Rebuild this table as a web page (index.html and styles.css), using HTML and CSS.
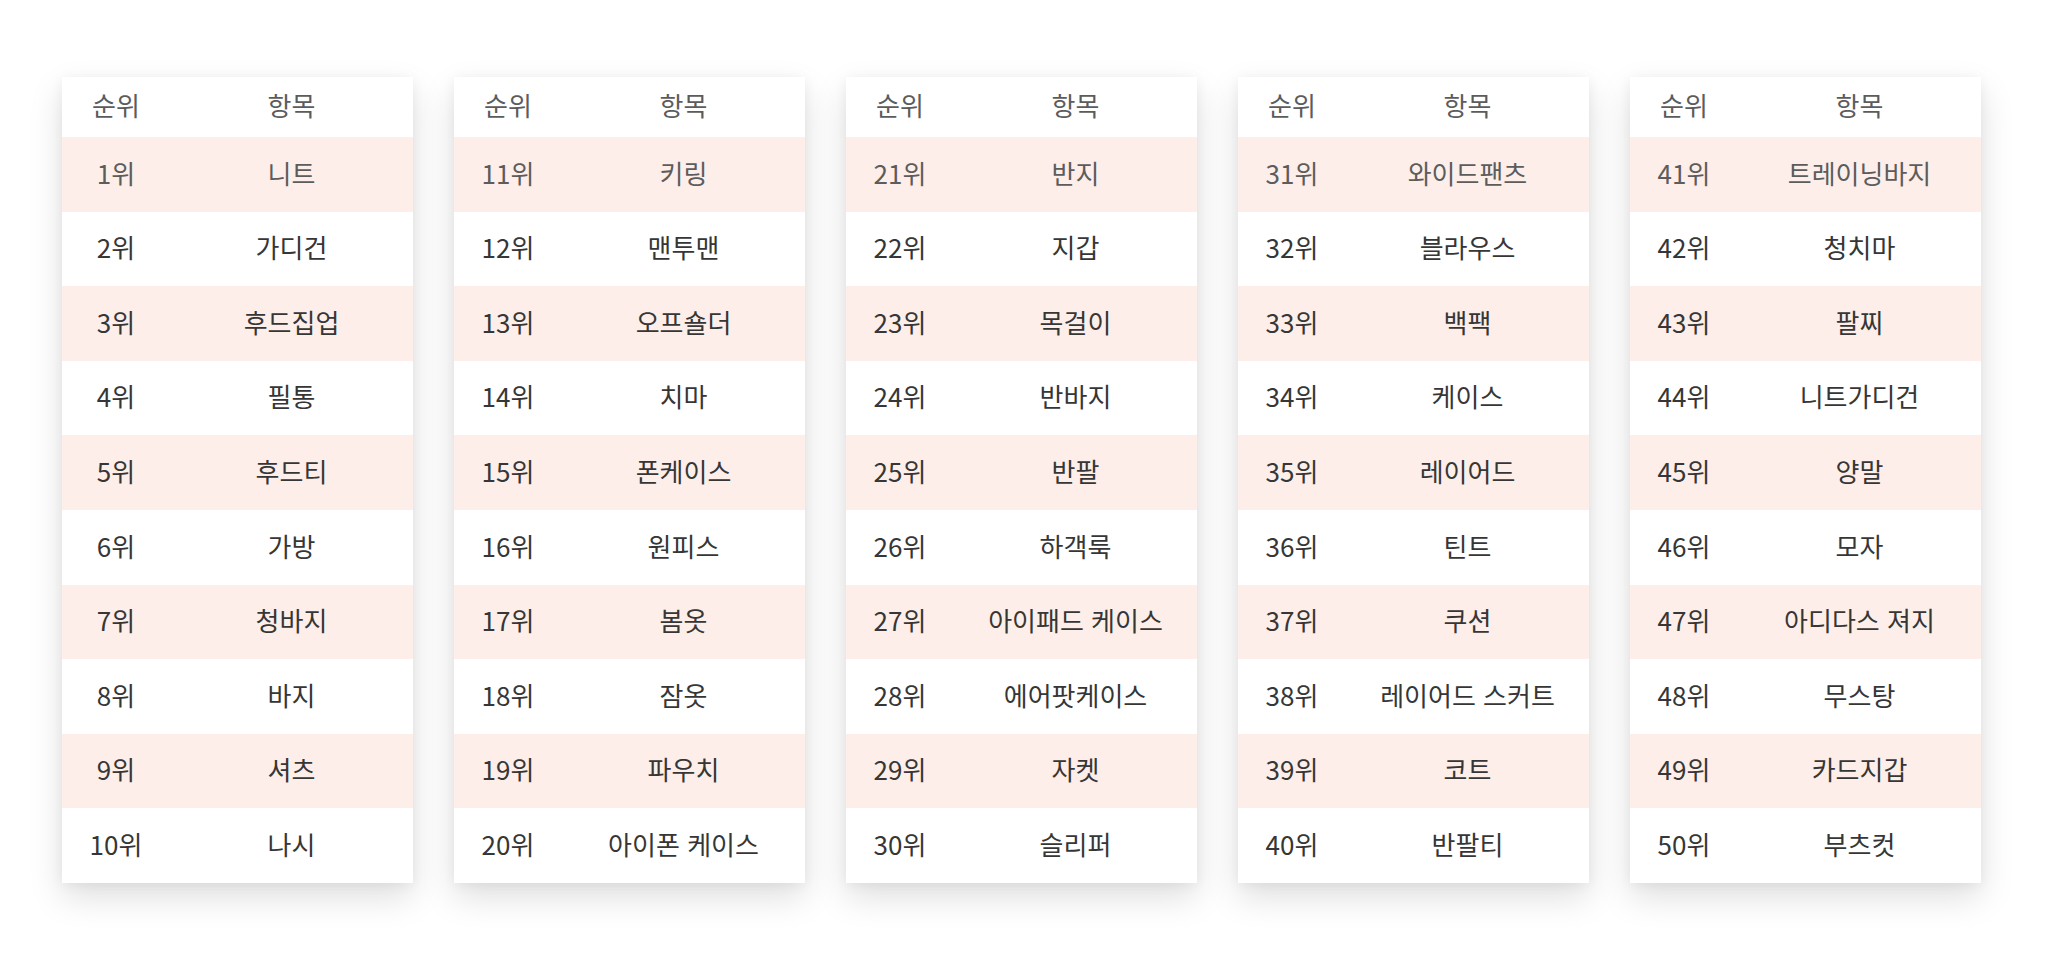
FILE: index.html
```html
<!DOCTYPE html>
<html lang="ko">
<head>
<meta charset="utf-8">
<title>순위</title>
<link rel="stylesheet" href="styles.css">
</head>
<body>
<main class="board">
  <section class="card">
  <table class="rank">
    <thead><tr><th class="c-rank">순위</th><th class="c-item">항목</th></tr></thead>
    <tbody>
      <tr class="first"><td>1위</td><td>니트</td></tr>
      <tr><td>2위</td><td>가디건</td></tr>
      <tr><td>3위</td><td>후드집업</td></tr>
      <tr><td>4위</td><td>필통</td></tr>
      <tr><td>5위</td><td>후드티</td></tr>
      <tr><td>6위</td><td>가방</td></tr>
      <tr><td>7위</td><td>청바지</td></tr>
      <tr><td>8위</td><td>바지</td></tr>
      <tr><td>9위</td><td>셔츠</td></tr>
      <tr><td>10위</td><td>나시</td></tr>
    </tbody>
  </table>
  </section>
  <section class="card">
  <table class="rank">
    <thead><tr><th class="c-rank">순위</th><th class="c-item">항목</th></tr></thead>
    <tbody>
      <tr class="first"><td>11위</td><td>키링</td></tr>
      <tr><td>12위</td><td>맨투맨</td></tr>
      <tr><td>13위</td><td>오프숄더</td></tr>
      <tr><td>14위</td><td>치마</td></tr>
      <tr><td>15위</td><td>폰케이스</td></tr>
      <tr><td>16위</td><td>원피스</td></tr>
      <tr><td>17위</td><td>봄옷</td></tr>
      <tr><td>18위</td><td>잠옷</td></tr>
      <tr><td>19위</td><td>파우치</td></tr>
      <tr><td>20위</td><td>아이폰 케이스</td></tr>
    </tbody>
  </table>
  </section>
  <section class="card">
  <table class="rank">
    <thead><tr><th class="c-rank">순위</th><th class="c-item">항목</th></tr></thead>
    <tbody>
      <tr class="first"><td>21위</td><td>반지</td></tr>
      <tr><td>22위</td><td>지갑</td></tr>
      <tr><td>23위</td><td>목걸이</td></tr>
      <tr><td>24위</td><td>반바지</td></tr>
      <tr><td>25위</td><td>반팔</td></tr>
      <tr><td>26위</td><td>하객룩</td></tr>
      <tr><td>27위</td><td>아이패드 케이스</td></tr>
      <tr><td>28위</td><td>에어팟케이스</td></tr>
      <tr><td>29위</td><td>자켓</td></tr>
      <tr><td>30위</td><td>슬리퍼</td></tr>
    </tbody>
  </table>
  </section>
  <section class="card">
  <table class="rank">
    <thead><tr><th class="c-rank">순위</th><th class="c-item">항목</th></tr></thead>
    <tbody>
      <tr class="first"><td>31위</td><td>와이드팬츠</td></tr>
      <tr><td>32위</td><td>블라우스</td></tr>
      <tr><td>33위</td><td>백팩</td></tr>
      <tr><td>34위</td><td>케이스</td></tr>
      <tr><td>35위</td><td>레이어드</td></tr>
      <tr><td>36위</td><td>틴트</td></tr>
      <tr><td>37위</td><td>쿠션</td></tr>
      <tr><td>38위</td><td>레이어드 스커트</td></tr>
      <tr><td>39위</td><td>코트</td></tr>
      <tr><td>40위</td><td>반팔티</td></tr>
    </tbody>
  </table>
  </section>
  <section class="card">
  <table class="rank">
    <thead><tr><th class="c-rank">순위</th><th class="c-item">항목</th></tr></thead>
    <tbody>
      <tr class="first"><td>41위</td><td>트레이닝바지</td></tr>
      <tr><td>42위</td><td>청치마</td></tr>
      <tr><td>43위</td><td>팔찌</td></tr>
      <tr><td>44위</td><td>니트가디건</td></tr>
      <tr><td>45위</td><td>양말</td></tr>
      <tr><td>46위</td><td>모자</td></tr>
      <tr><td>47위</td><td>아디다스 져지</td></tr>
      <tr><td>48위</td><td>무스탕</td></tr>
      <tr><td>49위</td><td>카드지갑</td></tr>
      <tr><td>50위</td><td>부츠컷</td></tr>
    </tbody>
  </table>
  </section>
</main>
</body>
</html>
```

FILE: styles.css
```css
html, body {
  margin: 0;
  padding: 0;
  background: #ffffff;
}

body {
  font-family: "Noto Sans CJK KR", "Noto Sans", sans-serif;
  color: #363636;
  min-height: 960px;
}

.board {
  display: flex;
  align-items: flex-start;
  gap: 41px;
  padding: 77px 0 77px 62px;
}

.card {
  width: 351px;
  background: #ffffff;
  box-shadow: 0 14px 32px rgba(0, 0, 0, 0.13), 0 2px 12px rgba(0, 0, 0, 0.05);
}

.rank {
  width: 100%;
  border-collapse: collapse;
  border-spacing: 0;
  table-layout: fixed;
  font-size: 26px;
  line-height: 1.2;
}

.rank th,
.rank td {
  padding: 0 0 4px 0;
  text-align: center;
  white-space: nowrap;
  font-weight: 400;
}

.rank .c-rank {
  width: 108px;
}

.rank thead tr {
  height: 60px;
}

.rank th {
  color: #5c5c5c;
}

.rank tbody tr {
  height: 74.6px;
}

.rank tbody tr:nth-child(odd) {
  background: #fdeee9;
}

.rank tbody tr.first {
  color: #5c5c5c;
}
```
